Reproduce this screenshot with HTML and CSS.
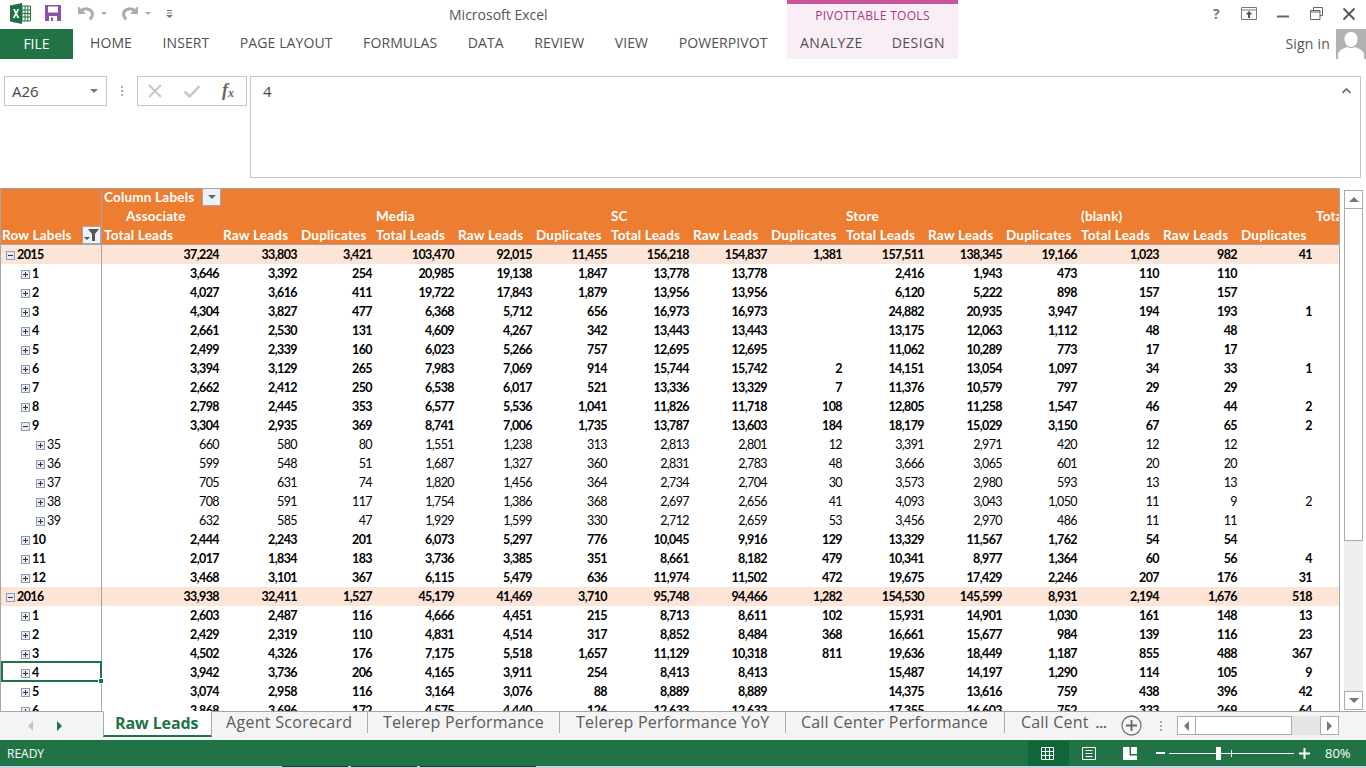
FILE: index.html
```html
<!DOCTYPE html>
<html>

<head>
    <meta charset='utf-8'>
    <title>Microsoft Excel</title>
    <link rel="stylesheet" href="styles.css">
</head>

<body>
    <div class="header">
        <div class="header-left">
            <div class="qat">
                <svg class="app-icon" width="21" height="21" viewBox="0 0 21 21">
                    <path d="M0 2.500 12 0v21L0 18.500z" fill="#1e7145" />
                    <path d="M12 3h8.500v15H12z" fill="#fff" stroke="#1e7145" />
                    <path d="M12 7h8M12 10.500h8M12 14h8M15 3v15M17.800 3v15" stroke="#1e7145" />
                    <path d="M3 6h2l1.100 2.700L7.300 6h1.900L7.100 10.400 9.300 15H7.300L6 12.100 4.700 15H2.800l2.200-4.600z" fill="#fff" />
                </svg>
                <svg class="save-icon" width="16" height="16" viewBox="0 0 16 16">
                    <path d="M0 0h16v16H0z" fill="#8a55a8" />
                    <path d="M3 1.500h10v6H3z" fill="#fff" />
                    <path d="M4 11h8v5H4z" fill="#fff" />
                    <path d="M6 12.500h2v3.500H6z" fill="#8a55a8" />
                </svg>
                <svg class="undo-icon" width="18" height="16" viewBox="0 0 18 16">
                    <path d="M1 1v8h8z" fill="#ababab" />
                    <path d="M4.500 5.500C8 2.800 13 3.500 15 7c1 2 .5 4.500-2 7.500" fill="none" stroke="#ababab" stroke-width="3" />
                </svg>
                <span class="qat-caret"></span>
                <svg class="redo-icon" width="18" height="16" viewBox="0 0 18 16">
                    <path d="M17 1v8H9z" fill="#ababab" />
                    <path d="M13.500 5.500C10 2.800 5 3.500 3 7c-1 2-.5 4.500 2 7.500" fill="none" stroke="#ababab" stroke-width="3" />
                </svg>
                <span class="qat-caret"></span>
                <svg class="custom-icon" width="7" height="8" viewBox="0 0 7 8">
                    <path d="M1 .5h5M1 3h5" stroke="#777" fill="none" />
                    <path d="M0 5h7L3.500 8z" fill="#777" />
                </svg>
                <div class="app-title">Microsoft Excel</div>
            </div>
            <div class="tabs">
                <div class="file-tab">FILE</div>
                <div class="tab tab-first">HOME</div>
                <div class="tab">INSERT</div>
                <div class="tab">PAGE LAYOUT</div>
                <div class="tab">FORMULAS</div>
                <div class="tab">DATA</div>
                <div class="tab">REVIEW</div>
                <div class="tab">VIEW</div>
                <div class="tab">POWERPIVOT</div>
            </div>
        </div>
        <div class="pivot-tools">
            <div class="pivot-title">PIVOTTABLE TOOLS</div>
            <div class="pivot-tabs">
                <div class="tab">ANALYZE</div>
                <div class="tab">DESIGN</div>
            </div>
        </div>
        <div class="header-right">
            <div class="window-btns">
                <span class="help-btn">?</span>
                <svg class="display-btn" width="16" height="13" viewBox="0 0 16 13">
                    <path d="M.5.500h15v12H.500zM.5 3h15" fill="none" stroke="#777" />
                    <path d="M8 4 4.500 7.500H7V11h2V7.500h2.500z" fill="#555" />
                </svg>
                <svg class="min-btn" width="14" height="14" viewBox="0 0 14 14">
                    <path d="M1 9.500h12" stroke="#666" stroke-width="2" />
                </svg>
                <svg class="restore-btn" width="13" height="13" viewBox="0 0 13 13">
                    <path d="M3.500 3V.5h9v8H10M.5 3.500h9.500v9H.5zM.5 5h9.500" fill="none" stroke="#666" />
                </svg>
                <svg class="close-btn" width="14" height="14" viewBox="0 0 14 14">
                    <path d="M1.500 1.500l11 11M12.500 1.500l-11 11" stroke="#555" stroke-width="1.800" />
                </svg>
            </div>
            <div class="signin">
                <span class="signin-text">Sign in</span>
                <svg class="avatar" width="30" height="30" viewBox="0 0 30 30">
                    <path d="M0 0h30v30H0z" fill="#b1b1b1" />
                    <path d="M15 3c4 0 6.500 3 6.500 7S19 18 15 18 8.500 14 8.500 10 11 3 15 3z" fill="#fff" />
                    <path d="M2 30v-4c0-4 4-6 9-8 2.500 1.500 5.500 1.500 8 0 5 2 9 4 9 8v4z" fill="#fff" />
                </svg>
            </div>
        </div>
    </div>

    <div class="formula-bar">
        <div class="name-box">
            <span>A26</span>
            <span class="name-caret"></span>
        </div>
        <div class="bar-dots"></div>
        <div class="fx-box">
            <svg width="16" height="16" viewBox="0 0 16 16">
                <path d="M2 2l12 12M14 2 2 14" stroke="#c6c6c6" stroke-width="2" />
            </svg>
            <svg width="18" height="16" viewBox="0 0 18 16">
                <path d="M1.500 8.500l5 5L16.500 3" stroke="#c6c6c6" stroke-width="2.500" fill="none" />
            </svg>
            <span class="fx-label">f<sub>x</sub></span>
        </div>
        <div class="formula-input">
            <span>4</span>
            <svg class="formula-up" width="9" height="6" viewBox="0 0 9 6">
                <path d="M.5 5 4.500 1l4 4" stroke="#666" stroke-width="1.600" fill="none" />
            </svg>
        </div>
    </div>

    <div class="sheet">
        <div class="cells">
            <table class="pivot">
                <colgroup>
                    <col class="col-label">
                    <col class="col-first">
                    <col class="col-raw">
                    <col class="col-dup">
                    <col class="col-total">
                    <col class="col-raw">
                    <col class="col-dup">
                    <col class="col-total">
                    <col class="col-raw">
                    <col class="col-dup">
                    <col class="col-total">
                    <col class="col-raw">
                    <col class="col-dup">
                    <col class="col-total">
                    <col class="col-raw">
                    <col class="col-dup">
                    <col class="col-rest">
                </colgroup>
                <tr class="head head-top">
                    <td class="label"></td>
                    <td><div class="col-labels">Column Labels<span class="drop-btn"><span class="drop-caret"></span></span></div></td>
                    <td></td><td></td><td></td><td></td><td></td><td></td><td></td><td></td><td></td><td></td><td></td><td></td><td></td><td></td><td></td>
                </tr>
                <tr class="head">
                    <td class="label"></td>
                    <td class="associate">Associate</td>
                    <td></td><td></td>
                    <td>Media</td>
                    <td></td><td></td>
                    <td>SC</td>
                    <td></td><td></td>
                    <td>Store</td>
                    <td></td><td></td>
                    <td>(blank)</td>
                    <td></td><td></td>
                    <td>Total</td>
                </tr>
                <tr class="head head-bottom">
                    <td class="label"><div class="row-labels">Row Labels<span class="drop-btn">
                        <svg width="15" height="12" viewBox="0 0 15 12">
                            <path d="M4 0h11L11 5v7H8V5z" fill="#555" />
                            <path d="M0 8h6L3 11z" fill="#555" />
                        </svg>
                    </span></div></td>
                    <td>Total Leads</td><td>Raw Leads</td><td>Duplicates</td>
                    <td>Total Leads</td><td>Raw Leads</td><td>Duplicates</td>
                    <td>Total Leads</td><td>Raw Leads</td><td>Duplicates</td>
                    <td>Total Leads</td><td>Raw Leads</td><td>Duplicates</td>
                    <td>Total Leads</td><td>Raw Leads</td><td>Duplicates</td>
                    <td></td>
                </tr>
                <tr class="year"><td class="label"><span class="exp minus"></span>2015</td><td>37,224</td><td>33,803</td><td>3,421</td><td>103,470</td><td>92,015</td><td>11,455</td><td>156,218</td><td>154,837</td><td>1,381</td><td>157,511</td><td>138,345</td><td>19,166</td><td>1,023</td><td>982</td><td>41</td><td></td></tr>
                <tr class="month"><td class="label"><span class="exp"></span>1</td><td>3,646</td><td>3,392</td><td>254</td><td>20,985</td><td>19,138</td><td>1,847</td><td>13,778</td><td>13,778</td><td></td><td>2,416</td><td>1,943</td><td>473</td><td>110</td><td>110</td><td></td><td></td></tr>
                <tr class="month"><td class="label"><span class="exp"></span>2</td><td>4,027</td><td>3,616</td><td>411</td><td>19,722</td><td>17,843</td><td>1,879</td><td>13,956</td><td>13,956</td><td></td><td>6,120</td><td>5,222</td><td>898</td><td>157</td><td>157</td><td></td><td></td></tr>
                <tr class="month"><td class="label"><span class="exp"></span>3</td><td>4,304</td><td>3,827</td><td>477</td><td>6,368</td><td>5,712</td><td>656</td><td>16,973</td><td>16,973</td><td></td><td>24,882</td><td>20,935</td><td>3,947</td><td>194</td><td>193</td><td>1</td><td></td></tr>
                <tr class="month"><td class="label"><span class="exp"></span>4</td><td>2,661</td><td>2,530</td><td>131</td><td>4,609</td><td>4,267</td><td>342</td><td>13,443</td><td>13,443</td><td></td><td>13,175</td><td>12,063</td><td>1,112</td><td>48</td><td>48</td><td></td><td></td></tr>
                <tr class="month"><td class="label"><span class="exp"></span>5</td><td>2,499</td><td>2,339</td><td>160</td><td>6,023</td><td>5,266</td><td>757</td><td>12,695</td><td>12,695</td><td></td><td>11,062</td><td>10,289</td><td>773</td><td>17</td><td>17</td><td></td><td></td></tr>
                <tr class="month"><td class="label"><span class="exp"></span>6</td><td>3,394</td><td>3,129</td><td>265</td><td>7,983</td><td>7,069</td><td>914</td><td>15,744</td><td>15,742</td><td>2</td><td>14,151</td><td>13,054</td><td>1,097</td><td>34</td><td>33</td><td>1</td><td></td></tr>
                <tr class="month"><td class="label"><span class="exp"></span>7</td><td>2,662</td><td>2,412</td><td>250</td><td>6,538</td><td>6,017</td><td>521</td><td>13,336</td><td>13,329</td><td>7</td><td>11,376</td><td>10,579</td><td>797</td><td>29</td><td>29</td><td></td><td></td></tr>
                <tr class="month"><td class="label"><span class="exp"></span>8</td><td>2,798</td><td>2,445</td><td>353</td><td>6,577</td><td>5,536</td><td>1,041</td><td>11,826</td><td>11,718</td><td>108</td><td>12,805</td><td>11,258</td><td>1,547</td><td>46</td><td>44</td><td>2</td><td></td></tr>
                <tr class="month"><td class="label"><span class="exp minus"></span>9</td><td>3,304</td><td>2,935</td><td>369</td><td>8,741</td><td>7,006</td><td>1,735</td><td>13,787</td><td>13,603</td><td>184</td><td>18,179</td><td>15,029</td><td>3,150</td><td>67</td><td>65</td><td>2</td><td></td></tr>
                <tr class="day"><td class="label"><span class="exp"></span>35</td><td>660</td><td>580</td><td>80</td><td>1,551</td><td>1,238</td><td>313</td><td>2,813</td><td>2,801</td><td>12</td><td>3,391</td><td>2,971</td><td>420</td><td>12</td><td>12</td><td></td><td></td></tr>
                <tr class="day"><td class="label"><span class="exp"></span>36</td><td>599</td><td>548</td><td>51</td><td>1,687</td><td>1,327</td><td>360</td><td>2,831</td><td>2,783</td><td>48</td><td>3,666</td><td>3,065</td><td>601</td><td>20</td><td>20</td><td></td><td></td></tr>
                <tr class="day"><td class="label"><span class="exp"></span>37</td><td>705</td><td>631</td><td>74</td><td>1,820</td><td>1,456</td><td>364</td><td>2,734</td><td>2,704</td><td>30</td><td>3,573</td><td>2,980</td><td>593</td><td>13</td><td>13</td><td></td><td></td></tr>
                <tr class="day"><td class="label"><span class="exp"></span>38</td><td>708</td><td>591</td><td>117</td><td>1,754</td><td>1,386</td><td>368</td><td>2,697</td><td>2,656</td><td>41</td><td>4,093</td><td>3,043</td><td>1,050</td><td>11</td><td>9</td><td>2</td><td></td></tr>
                <tr class="day"><td class="label"><span class="exp"></span>39</td><td>632</td><td>585</td><td>47</td><td>1,929</td><td>1,599</td><td>330</td><td>2,712</td><td>2,659</td><td>53</td><td>3,456</td><td>2,970</td><td>486</td><td>11</td><td>11</td><td></td><td></td></tr>
                <tr class="month"><td class="label"><span class="exp"></span>10</td><td>2,444</td><td>2,243</td><td>201</td><td>6,073</td><td>5,297</td><td>776</td><td>10,045</td><td>9,916</td><td>129</td><td>13,329</td><td>11,567</td><td>1,762</td><td>54</td><td>54</td><td></td><td></td></tr>
                <tr class="month"><td class="label"><span class="exp"></span>11</td><td>2,017</td><td>1,834</td><td>183</td><td>3,736</td><td>3,385</td><td>351</td><td>8,661</td><td>8,182</td><td>479</td><td>10,341</td><td>8,977</td><td>1,364</td><td>60</td><td>56</td><td>4</td><td></td></tr>
                <tr class="month"><td class="label"><span class="exp"></span>12</td><td>3,468</td><td>3,101</td><td>367</td><td>6,115</td><td>5,479</td><td>636</td><td>11,974</td><td>11,502</td><td>472</td><td>19,675</td><td>17,429</td><td>2,246</td><td>207</td><td>176</td><td>31</td><td></td></tr>
                <tr class="year"><td class="label"><span class="exp minus"></span>2016</td><td>33,938</td><td>32,411</td><td>1,527</td><td>45,179</td><td>41,469</td><td>3,710</td><td>95,748</td><td>94,466</td><td>1,282</td><td>154,530</td><td>145,599</td><td>8,931</td><td>2,194</td><td>1,676</td><td>518</td><td></td></tr>
                <tr class="month"><td class="label"><span class="exp"></span>1</td><td>2,603</td><td>2,487</td><td>116</td><td>4,666</td><td>4,451</td><td>215</td><td>8,713</td><td>8,611</td><td>102</td><td>15,931</td><td>14,901</td><td>1,030</td><td>161</td><td>148</td><td>13</td><td></td></tr>
                <tr class="month"><td class="label"><span class="exp"></span>2</td><td>2,429</td><td>2,319</td><td>110</td><td>4,831</td><td>4,514</td><td>317</td><td>8,852</td><td>8,484</td><td>368</td><td>16,661</td><td>15,677</td><td>984</td><td>139</td><td>116</td><td>23</td><td></td></tr>
                <tr class="month"><td class="label"><span class="exp"></span>3</td><td>4,502</td><td>4,326</td><td>176</td><td>7,175</td><td>5,518</td><td>1,657</td><td>11,129</td><td>10,318</td><td>811</td><td>19,636</td><td>18,449</td><td>1,187</td><td>855</td><td>488</td><td>367</td><td></td></tr>
                <tr class="month"><td class="label selected"><span class="exp"></span>4</td><td>3,942</td><td>3,736</td><td>206</td><td>4,165</td><td>3,911</td><td>254</td><td>8,413</td><td>8,413</td><td></td><td>15,487</td><td>14,197</td><td>1,290</td><td>114</td><td>105</td><td>9</td><td></td></tr>
                <tr class="month"><td class="label"><span class="exp"></span>5</td><td>3,074</td><td>2,958</td><td>116</td><td>3,164</td><td>3,076</td><td>88</td><td>8,889</td><td>8,889</td><td></td><td>14,375</td><td>13,616</td><td>759</td><td>438</td><td>396</td><td>42</td><td></td></tr>
                <tr class="month"><td class="label"><span class="exp"></span>6</td><td>3,868</td><td>3,696</td><td>172</td><td>4,575</td><td>4,440</td><td>126</td><td>12,633</td><td>12,633</td><td></td><td>17,355</td><td>16,603</td><td>752</td><td>333</td><td>269</td><td>64</td><td></td></tr>
            </table>
        </div>
        <div class="vscroll">
            <div class="scroll-btn"><span class="caret-up"></span></div>
            <div class="scroll-track">
                <div class="scroll-thumb"></div>
            </div>
            <div class="scroll-btn"><span class="caret-down"></span></div>
        </div>
    </div>

    <div class="sheet-tabs">
        <div class="tab-nav">
            <span class="nav-left"></span>
            <span class="nav-right"></span>
        </div>
        <div class="sheet-tab active">Raw Leads</div>
        <div class="sheet-tab tab-agent">Agent Scorecard</div>
        <div class="sheet-tab tab-tele">Telerep Performance</div>
        <div class="sheet-tab tab-yoy">Telerep Performance YoY</div>
        <div class="sheet-tab tab-call">Call Center Performance</div>
        <div class="sheet-tab tab-cut">Call Cent<span class="more">...</span></div>
        <svg class="add-sheet" width="21" height="21" viewBox="0 0 21 21">
            <circle cx="10.500" cy="10.500" r="9.500" fill="none" stroke="#777" stroke-width="1.300" />
            <path d="M10.500 5v11M5 10.500h11" stroke="#666" stroke-width="1.800" />
        </svg>
        <div class="bar-dots tab-dots"></div>
        <div class="hscroll">
            <div class="hscroll-btn"><span class="caret-left"></span></div>
            <div class="hscroll-thumb"></div>
            <div class="hscroll-track"></div>
            <div class="hscroll-btn"><span class="caret-right"></span></div>
        </div>
    </div>

    <div class="status">
        <div class="ready">READY</div>
        <div class="view-btn view-active">
            <svg width="13" height="13" viewBox="0 0 13 13">
                <path d="M.5.500h12v12H.500zM.5 4.500h12M.5 8.500h12M4.500.5v12M8.500.5v12" fill="none" stroke="#fff" />
            </svg>
        </div>
        <div class="view-btn">
            <svg width="14" height="13" viewBox="0 0 14 13">
                <path d="M.5.500h13v12H.500z" fill="none" stroke="#fff" />
                <path d="M3.500 3.500h7M3.500 6.500h7M3.500 9.500h7" stroke="#fff" />
            </svg>
        </div>
        <div class="view-btn">
            <svg width="14" height="13" viewBox="0 0 14 13">
                <path d="M0 0h6.500v8.500H14V13H0zM8 0h6v7H8z" fill="#fff" />
            </svg>
        </div>
        <div class="zoom-minus"></div>
        <div class="zoom-slider">
            <span class="zoom-tick"></span>
            <span class="zoom-thumb"></span>
        </div>
        <svg class="zoom-plus" width="11" height="11" viewBox="0 0 11 11">
            <path d="M5.500 0v11M0 5.500h11" stroke="#fff" stroke-width="2" />
        </svg>
        <div class="zoom-value">80%</div>
    </div>

    <div class="taskbar">
        <span class="task task-a"></span>
        <span class="task task-b"></span>
        <span class="task task-c"></span>
    </div>
</body>

</html>
```

FILE: styles.css
```css
html, body {
    margin: 0;
    height: 100%;
}
body {
    width: 1366px;
    height: 768px;
    overflow: hidden;
    display: flex;
    flex-direction: column;
    background: white;
    font-family: "Open Sans", "Liberation Sans", sans-serif;
    color: #444;
}

/* title bar and ribbon tabs */
.header {
    display: flex;
    height: 59px;
    flex: none;
}
.header-left {
    width: 787px;
    flex: none;
}
.qat {
    height: 29px;
    display: flex;
    align-items: center;
}
.app-icon {
    margin-left: 10px;
    margin-top: -3px;
}
.save-icon {
    margin-left: 14px;
    margin-top: -3px;
}
.undo-icon {
    margin-left: 16px;
    margin-top: -3px;
}
.redo-icon {
    margin-left: 14px;
    margin-top: -3px;
}
.qat-caret {
    width: 0;
    height: 0;
    margin-left: 6px;
    margin-top: -3px;
    border-left: 3px solid transparent;
    border-right: 3px solid transparent;
    border-top: 3px solid #aaa;
}
.custom-icon {
    margin-left: 15px;
    margin-top: -2px;
}
.app-title {
    margin-left: 276px;
    font-size: 14px;
    color: #555;
}
.tabs {
    display: flex;
    height: 30px;
    align-items: center;
}
.file-tab {
    width: 73px;
    height: 30px;
    flex: none;
    line-height: 30px;
    background: #217346;
    color: white;
    text-align: center;
    font-size: 14px;
}
.tab {
    flex: none;
    font-size: 14px;
    letter-spacing: 0.1px;
    color: #505050;
    margin-right: 30.500px;
    margin-bottom: 3px;
    white-space: nowrap;
}
.tab:last-child {
    margin-right: 0;
}
.tab-first {
    margin-left: 17px;
}
.pivot-tools {
    width: 171px;
    flex: none;
    background: #faeef6;
    border-top: 4px solid #c6559b;
    box-sizing: border-box;
}
.pivot-title {
    height: 25px;
    line-height: 24px;
    font-size: 12px;
    letter-spacing: 0.3px;
    color: #a6397f;
    text-align: center;
}
.pivot-tabs {
    display: flex;
    height: 30px;
    align-items: center;
    padding-left: 13px;
}
.pivot-tabs .tab {
    letter-spacing: 0.5px;
    margin-right: 29px;
}
.header-right {
    flex: 1;
}
.window-btns {
    height: 29px;
    display: flex;
    align-items: center;
}
.help-btn {
    margin-left: 255px;
    margin-top: -2px;
    font-size: 14px;
    font-weight: bold;
    color: #777;
}
.display-btn {
    margin-left: 21px;
    margin-top: -2px;
}
.min-btn {
    margin-left: 19px;
    margin-top: -2px;
}
.restore-btn {
    margin-left: 20px;
    margin-top: -2px;
}
.close-btn {
    margin-left: 19px;
    margin-top: -2px;
}
.signin {
    height: 30px;
    display: flex;
    justify-content: flex-end;
    align-items: center;
    font-size: 14px;
    letter-spacing: 0.2px;
    color: #555;
}
.signin-text {
    margin-bottom: 2px;
}
.avatar {
    margin-left: 6px;
}

/* formula bar */
.formula-bar {
    display: flex;
    height: 102px;
    margin-top: 17px;
    flex: none;
    align-items: flex-start;
}
.name-box {
    width: 103px;
    height: 30px;
    margin-left: 4px;
    box-sizing: border-box;
    border: 1px solid #c6c6c6;
    display: flex;
    align-items: center;
    justify-content: space-between;
    padding: 0 8px 0 7px;
    font-size: 15px;
    color: #444;
}
.name-caret {
    width: 0;
    height: 0;
    border-left: 4px solid transparent;
    border-right: 4px solid transparent;
    border-top: 4px solid #777;
}
.bar-dots {
    width: 2px;
    height: 10px;
    margin: 10px 14px 0 14px;
    background: repeating-linear-gradient(#aaa 0 2px, transparent 2px 4px);
}
.fx-box {
    width: 110px;
    height: 30px;
    box-sizing: border-box;
    border: 1px solid #c6c6c6;
    display: flex;
    align-items: center;
    padding-left: 9px;
    gap: 20px;
}
.fx-label {
    font-family: "Liberation Serif", serif;
    font-style: italic;
    font-weight: bold;
    font-size: 18px;
    color: #666;
    margin-left: 1px;
    line-height: 20px;
}
.fx-label sub {
    font-size: 12px;
    vertical-align: -1px;
}
.formula-input {
    width: 1111px;
    height: 102px;
    margin-left: 3px;
    box-sizing: border-box;
    border: 1px solid #c6c6c6;
    padding: 4px 12px;
    font-size: 15px;
    color: #444;
    display: flex;
    justify-content: space-between;
}
.formula-up {
    margin-top: 7px;
    margin-right: -3px;
}

/* the grid */
.sheet {
    display: flex;
    height: 523px;
    margin-top: 10px;
    flex: none;
}
.cells {
    width: 1340px;
    height: 523px;
    box-sizing: border-box;
    overflow: hidden;
    border-left: 1px solid #a6a6a6;
    border-right: 1px solid #a6a6a6;
    flex: none;
}
.pivot {
    border-collapse: separate;
    border-spacing: 0;
    table-layout: fixed;
    width: 1338px;
    font-family: Lato, "Liberation Sans", sans-serif;
    font-size: 12.500px;
    letter-spacing: -0.6px;
    color: black;
}
.col-label { width: 101px; }
.col-first { width: 119px; }
.col-raw { width: 78px; }
.col-dup { width: 75px; }
.col-total { width: 82px; }
.col-rest { width: 25px; }
.pivot td {
    height: 19px;
    padding: 0 2px 0 0;
    box-sizing: border-box;
    text-align: right;
    white-space: nowrap;
    overflow: hidden;
    line-height: 18px;
}
.pivot td.label {
    text-align: left;
    border-right: 1px solid #a6a6a6;
    padding: 0;
}
.pivot .head td {
    background: #ed7d31;
    color: white;
    font-weight: bold;
    font-size: 13.500px;
    letter-spacing: 0.2px;
    line-height: 18px;
    vertical-align: top;
    text-align: left;
    padding: 0 0 0 2px;
}
.pivot .head-top td {
    box-shadow: inset 0 1px #a6a6a6;
}
.pivot .head-bottom td {
    box-shadow: inset 0 -1px #a6a6a6;
}
.pivot .head .associate {
    padding-left: 24px;
}
.pivot .head td.label {
    padding: 0;
}
.col-labels {
    display: flex;
    align-items: flex-start;
    justify-content: space-between;
}
.row-labels {
    display: flex;
    align-items: flex-start;
    justify-content: space-between;
    padding-left: 1px;
    height: 18px;
}
.drop-btn {
    width: 19px;
    height: 18px;
    box-sizing: border-box;
    flex: none;
    background: #eef1f6;
    border: 1px solid #a6a6a6;
    display: flex;
    align-items: center;
    justify-content: center;
}
.drop-caret {
    width: 0;
    height: 0;
    border-left: 4px solid transparent;
    border-right: 4px solid transparent;
    border-top: 4px solid #666;
}
.year td {
    background: #fce4d6;
    font-weight: bold;
}
.month td {
    font-weight: bold;
}
.exp {
    display: inline-block;
    width: 9px;
    height: 9px;
    box-sizing: border-box;
    margin-right: 2px;
    border: 1px solid #8f9cb5;
    vertical-align: -1px;
    background:
        linear-gradient(#333, #333) center / 5px 1px no-repeat,
        linear-gradient(#333, #333) center / 1px 5px no-repeat,
        #e6eaf2;
}
.exp.minus {
    background:
        linear-gradient(#333, #333) center / 5px 1px no-repeat,
        #e6eaf2;
}
.year .exp {
    margin-left: 5px;
}
.month .exp {
    margin-left: 20px;
}
.day .exp {
    margin-left: 35px;
}
.pivot td.selected {
    position: relative;
    overflow: visible;
}
.selected::before {
    content: "";
    position: absolute;
    left: 0;
    right: -1px;
    top: -2px;
    bottom: 0;
    border: 2px solid #217346;
}
.selected::after {
    content: "";
    position: absolute;
    right: -3px;
    bottom: -2px;
    width: 6px;
    height: 6px;
    background: #217346;
    border: 1px solid white;
    box-sizing: border-box;
}

/* vertical scrollbar */
.vscroll {
    width: 19px;
    margin: 2px 0 1px 4px;
    flex: none;
    display: flex;
    flex-direction: column;
}
.scroll-btn {
    height: 19px;
    box-sizing: border-box;
    border: 1px solid #ababab;
    display: flex;
    align-items: center;
    justify-content: center;
    flex: none;
    background: white;
}
.caret-up {
    width: 0;
    height: 0;
    border-left: 5px solid transparent;
    border-right: 5px solid transparent;
    border-bottom: 5px solid #777;
}
.caret-down {
    width: 0;
    height: 0;
    border-left: 5px solid transparent;
    border-right: 5px solid transparent;
    border-top: 5px solid #777;
}
.scroll-track {
    flex: 1;
    background: #efefef;
}
.scroll-thumb {
    height: 332px;
    box-sizing: border-box;
    background: white;
    border: 1px solid #ababab;
    border-top: 0;
}

/* sheet tabs */
.sheet-tabs {
    height: 29px;
    flex: none;
    display: flex;
    background: #f4f4f4;
    box-sizing: border-box;
    border-top: 1px solid #a6a6a6;
}
.tab-nav {
    width: 103px;
    flex: none;
    display: flex;
    align-items: center;
    padding: 0 0 1px 28px;
    box-sizing: border-box;
    gap: 24px;
}
.nav-left {
    width: 0;
    height: 0;
    border-top: 5px solid transparent;
    border-bottom: 5px solid transparent;
    border-right: 5px solid #c4c4c4;
}
.nav-right {
    width: 0;
    height: 0;
    border-top: 5px solid transparent;
    border-bottom: 5px solid transparent;
    border-left: 5px solid #217346;
}
.sheet-tab {
    font-size: 16px;
    letter-spacing: 0.2px;
    line-height: 21px;
    height: 21px;
    color: #5b5b5b;
    white-space: nowrap;
    flex: none;
    box-sizing: border-box;
    border-right: 1px solid #ababab;
}
.sheet-tab.active {
    width: 109px;
    height: 26px;
    margin-top: -1px;
    padding-left: 11px;
    line-height: 22px;
    background: white;
    color: #217346;
    font-weight: bold;
    border: 1px solid #ababab;
    border-top: 1px solid white;
    border-bottom: 2px solid #217346;
    letter-spacing: -0.1px;
}
.tab-agent {
    width: 156px;
    padding-left: 14px;
    letter-spacing: 0.3px;
}
.tab-tele {
    width: 192px;
    padding-left: 15px;
}
.tab-yoy {
    width: 226px;
    padding-left: 16px;
}
.tab-call {
    width: 219px;
    padding-left: 15px;
}
.tab-cut {
    width: 103px;
    padding-left: 16px;
    border-right: 0;
    overflow: hidden;
}
.more {
    color: #217346;
    font-weight: bold;
    font-size: 13px;
    letter-spacing: 0;
    margin-left: 7px;
}
.add-sheet {
    margin: 3px 0 0 13px;
    flex: none;
}
.tab-dots {
    margin: 9px 0 0 18px;
}
.hscroll {
    width: 162px;
    height: 19px;
    margin: 4px 0 0 15px;
    flex: none;
    display: flex;
}
.hscroll-btn {
    width: 19px;
    flex: none;
    box-sizing: border-box;
    border: 1px solid #ababab;
    background: white;
    display: flex;
    align-items: center;
    justify-content: center;
}
.caret-left {
    width: 0;
    height: 0;
    border-top: 5px solid transparent;
    border-bottom: 5px solid transparent;
    border-right: 5px solid #777;
}
.caret-right {
    width: 0;
    height: 0;
    border-top: 5px solid transparent;
    border-bottom: 5px solid transparent;
    border-left: 5px solid #777;
}
.hscroll-thumb {
    width: 96px;
    flex: none;
    box-sizing: border-box;
    background: white;
    border: 1px solid #ababab;
    border-left: 0;
}
.hscroll-track {
    flex: 1;
    background: #e6e6e6;
}

/* status bar */
.status {
    height: 26px;
    flex: none;
    display: flex;
    align-items: center;
    background: #217346;
    color: white;
}
.ready {
    width: 1028px;
    flex: none;
    box-sizing: border-box;
    padding-left: 7px;
    font-size: 12px;
}
.view-btn {
    width: 41px;
    height: 25px;
    flex: none;
    box-sizing: border-box;
    padding-right: 2px;
    display: flex;
    align-items: center;
    justify-content: center;
}
.view-active {
    background: #0f6638;
}
.zoom-minus {
    width: 9px;
    height: 2px;
    margin-left: 5px;
    background: white;
    flex: none;
}
.zoom-slider {
    width: 125px;
    height: 1px;
    margin-left: 4px;
    flex: none;
    background: white;
    position: relative;
}
.zoom-tick {
    position: absolute;
    left: 62px;
    top: -3px;
    width: 1px;
    height: 7px;
    background: white;
}
.zoom-thumb {
    position: absolute;
    left: 47px;
    top: -6px;
    width: 5px;
    height: 13px;
    background: white;
}
.zoom-plus {
    margin-left: 5px;
    flex: none;
}
.zoom-value {
    margin-left: 15px;
    font-size: 13px;
}

/* strip of the desktop taskbar below the window */
.taskbar {
    flex: 1;
    background: #c5d3e4;
    display: flex;
    padding-left: 282px;
    gap: 3px;
}
.task {
    height: 1px;
    background: #333;
}
.task-a { width: 66px; }
.task-b { width: 66px; }
.task-c { width: 116px; }
```
